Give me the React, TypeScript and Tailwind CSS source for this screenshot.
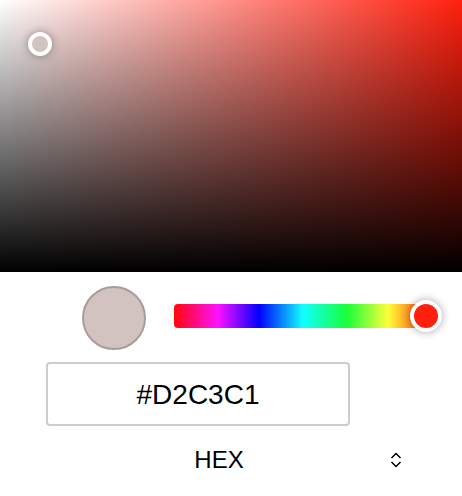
import { useState } from "react";

export default function App() {
  const [hex, setHex] = useState("#D2C3C1");
  const [hue, setHue] = useState(360);
  const [format, setFormat] = useState("hex");

  return (
    <main className="w-full bg-white font-['Liberation_Sans',Arial,sans-serif] text-black">
      <div
        role="group"
        aria-label="Saturation and brightness"
        className="relative h-68 w-full bg-[#ff200e] bg-[linear-gradient(to_top,#000,transparent),linear-gradient(to_right,#fff,transparent)]"
      >
        <button
          type="button"
          aria-label="Selected shade"
          className="absolute top-8 left-7 size-6 rounded-full border-4 border-white bg-[#d2c3c1] shadow-[0_0_8px_rgba(0,0,0,0.35)]"
        />
      </div>

      <div className="flex items-start gap-7 pt-3.5 pr-5 pl-20.5">
        <div className="size-16 shrink-0 rounded-full border-2 border-[#a89c9a] bg-[#d2c3c1]" />
        <input
          type="range"
          aria-label="Hue"
          min={0}
          max={360}
          value={hue}
          onChange={(e) => setHue(Number(e.target.value))}
          className="mt-4.5 h-6 min-w-0 flex-1 appearance-none rounded bg-[linear-gradient(to_right,#ff0808_0%,#ff10ff_17%,#0000ff_33%,#10ffff_50%,#18ff38_67%,#ffff38_83%,#ff200e_100%)] bg-[length:calc(100%-10px)_100%] bg-no-repeat outline-none [&::-webkit-slider-thumb]:size-8 [&::-webkit-slider-thumb]:appearance-none [&::-webkit-slider-thumb]:rounded-full [&::-webkit-slider-thumb]:border-4 [&::-webkit-slider-thumb]:border-white [&::-webkit-slider-thumb]:bg-[#ff200e] [&::-webkit-slider-thumb]:shadow-[0_0_8px_rgba(0,0,0,0.35)]"
        />
      </div>

      <div className="px-11.5 pt-3">
        <input
          type="text"
          aria-label="Colour value"
          value={hex}
          onChange={(e) => setHex(e.target.value)}
          className="block h-16 w-[304px] max-w-full rounded border-2 border-[#ccc] bg-white pt-0.5 text-center text-[28px] outline-none"
        />
        <div className="relative mt-3">
          <select
            aria-label="Colour format"
            value={format}
            onChange={(e) => setFormat(e.target.value)}
            className="block h-11 w-full appearance-none bg-transparent pr-6 text-center text-2xl outline-none [text-align-last:center]"
          >
            <option value="hex">HEX</option>
            <option value="rgb">RGB</option>
            <option value="hsl">HSL</option>
          </select>
          <svg
            aria-hidden="true"
            viewBox="0 0 12 16"
            className="pointer-events-none absolute top-3.5 right-3.5 h-4 w-3"
            fill="none"
            stroke="currentColor"
            strokeWidth="1.5"
          >
            <path d="M1.5 6 6 1.5 10.5 6M1.5 10 6 14.5 10.5 10" />
          </svg>
        </div>
      </div>
    </main>
  );
}
